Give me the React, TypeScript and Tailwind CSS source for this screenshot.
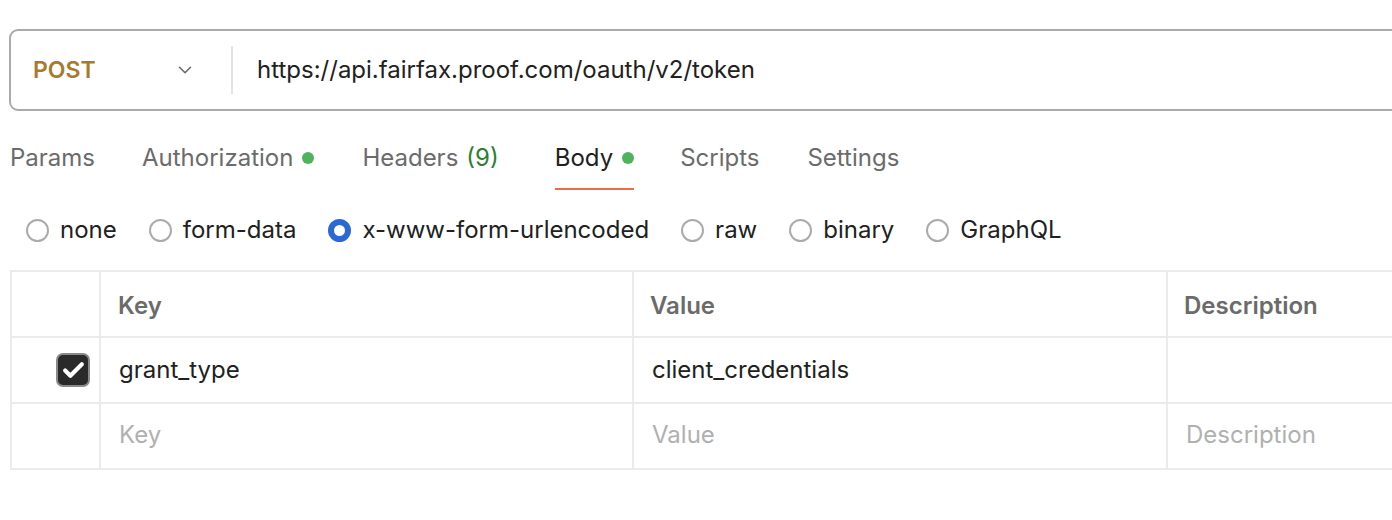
import { ChevronDown, Check } from 'lucide-react';

const tabs = [
    { label: 'Params', ml: 'ml-0' },
    { label: 'Authorization', dot: true, ml: 'ml-[47px]' },
    { label: 'Headers', count: '(9)', ml: 'ml-[48px]' },
    { label: 'Body', dot: true, active: true, ml: 'ml-[56px]' },
    { label: 'Scripts', ml: 'ml-[46px]' },
    { label: 'Settings', ml: 'ml-[48px]' },
];

const bodyTypes = ['none', 'form-data', 'x-www-form-urlencoded', 'raw', 'binary', 'GraphQL'];

function Radio({ checked }: { checked?: boolean }) {
    if (checked) {
        return (
            <span className="w-[23px] h-[23px] rounded-full border-[6px] border-[#2b68d6] bg-white shrink-0" />
        );
    }
    return <span className="w-[23px] h-[23px] rounded-full border-2 border-[#ababab] bg-white shrink-0" />;
}

export default function App() {
    return (
        <div
            className="w-[1392px] h-[520px] bg-white overflow-hidden text-[24px] text-[#212121]"
            style={{ fontFamily: 'Inter, "Noto Sans", sans-serif' }}
        >
            {/* URL bar */}
            <div className="ml-[9px] mt-[29px] w-[1400px] h-[82px] flex items-center border-2 border-[#ababab] rounded-[9px]">
                <div className="w-[220px] flex items-center justify-between pl-[22px] pr-[35px]">
                    <span className="font-semibold text-[#a77a2c] text-[23px]">POST</span>
                    <ChevronDown className="w-[22px] h-[22px] text-[#6b6b6b]" strokeWidth={1.75} />
                </div>
                <div className="w-[2px] h-[48px] bg-[#e2e2e2]" />
                <span className="ml-[24px]">https://api.fairfax.proof.com/oauth/v2/token</span>
            </div>

            {/* Tabs */}
            <div className="flex items-end pl-[10px] mt-[29px] h-[50px]">
                {tabs.map((t) => (
                    <div
                        key={t.label}
                        className={`${t.ml} flex items-center h-full pb-[12px] border-b-2 ${
                            t.active ? 'border-[#ea6e47] text-[#212121]' : 'border-transparent text-[#6b6b6b]'
                        }`}
                    >
                        <span>{t.label}</span>
                        {t.count && <span className="ml-[8px] text-[#2e7d32]">{t.count}</span>}
                        {t.dot && <span className="ml-[9px] w-[12px] h-[12px] rounded-full bg-[#4fb35c]" />}
                    </div>
                ))}
            </div>

            {/* Body type radios */}
            <div className="flex items-center pl-[26px] mt-[27px] h-[26px]">
                {bodyTypes.map((b) => (
                    <label key={b} className="flex items-center gap-[11px] mr-[32px]">
                        <Radio checked={b === 'x-www-form-urlencoded'} />
                        <span>{b}</span>
                    </label>
                ))}
            </div>

            {/* Table */}
            <div className="ml-[10px] mt-[27px] w-[1420px] border-2 border-[#ebebeb] border-r-0">
                <div className="grid grid-cols-[89px_533px_534px_1fr] h-[66px] pt-[3px] border-b-2 border-[#ebebeb] font-semibold text-[#6b6b6b]">
                    <div className="border-r-2 border-[#ebebeb] -mt-[3px]" />
                    <div className="border-r-2 border-[#ebebeb] -mt-[3px] pt-[3px] flex items-center pl-[17px]">Key</div>
                    <div className="border-r-2 border-[#ebebeb] -mt-[3px] pt-[3px] flex items-center pl-[16px]">Value</div>
                    <div className="flex items-center pl-[16px]">Description</div>
                </div>
                <div className="grid grid-cols-[89px_533px_534px_1fr] h-[66px] border-b-2 border-[#ebebeb]">
                    <div className="border-r-2 border-[#ebebeb] flex items-center justify-end pr-[9px]">
                        <span className="w-[34px] h-[34px] rounded-[7px] bg-[#2a2a2a] border-2 border-[#8a8a8a] flex items-center justify-center">
                            <Check className="w-[25px] h-[25px] text-white" strokeWidth={4} />
                        </span>
                    </div>
                    <div className="border-r-2 border-[#ebebeb] flex items-center pl-[18px]">grant_type</div>
                    <div className="border-r-2 border-[#ebebeb] flex items-center pl-[18px]">client_credentials</div>
                    <div />
                </div>
                <div className="grid grid-cols-[89px_533px_534px_1fr] h-[64px] text-[#b0b0b0]">
                    <div className="border-r-2 border-[#ebebeb]" />
                    <div className="border-r-2 border-[#ebebeb] flex items-center pl-[18px] pb-[3px]">Key</div>
                    <div className="border-r-2 border-[#ebebeb] flex items-center pl-[18px] pb-[3px]">Value</div>
                    <div className="flex items-center pl-[18px] pb-[3px]">Description</div>
                </div>
            </div>
        </div>
    );
}
